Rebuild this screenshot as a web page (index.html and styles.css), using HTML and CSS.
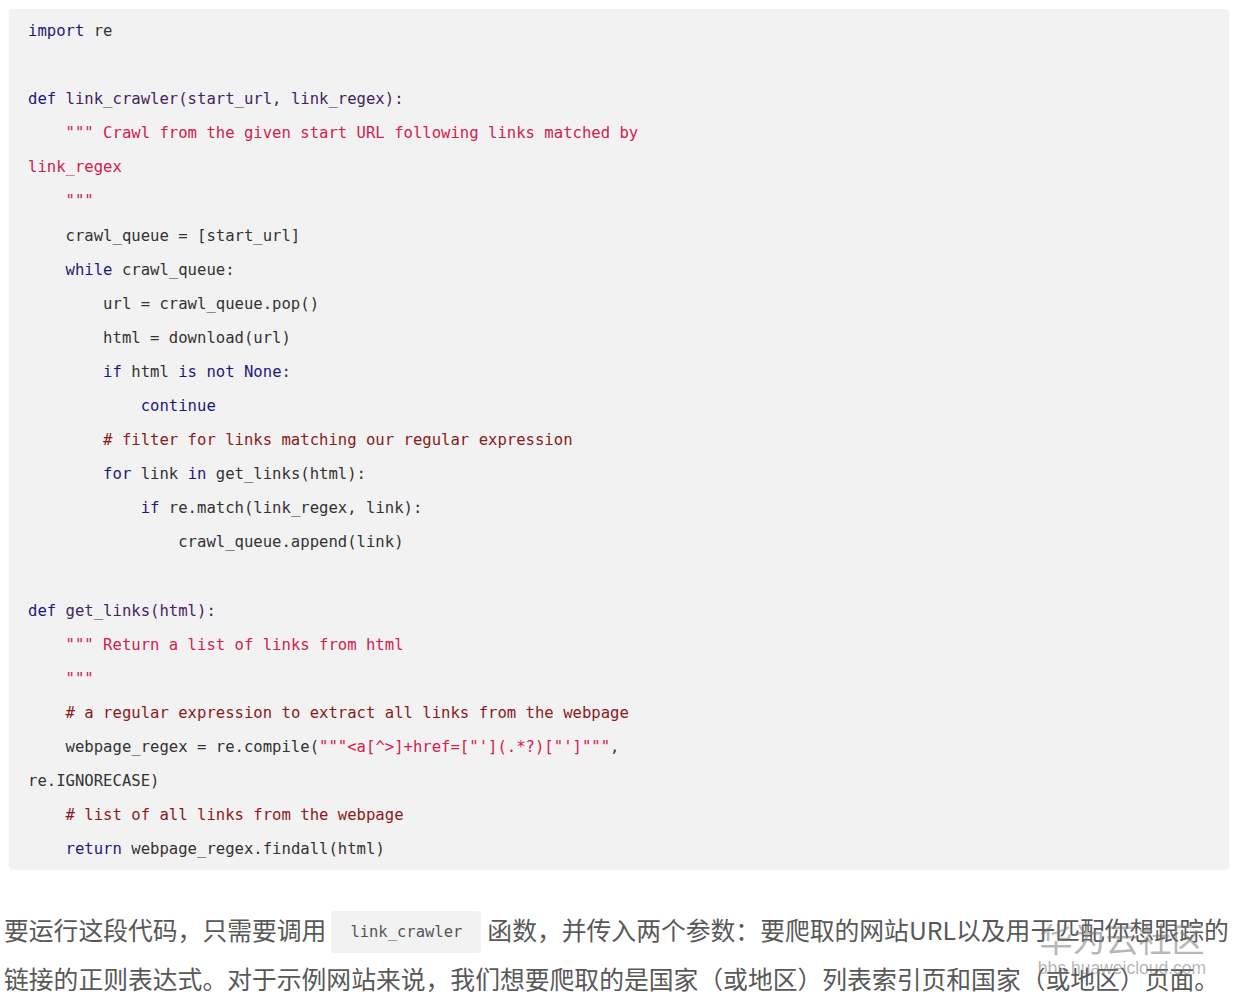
FILE: index.html
```html
<!DOCTYPE html>
<html lang="zh-CN">
<head>
<meta charset="utf-8">
<title>link_crawler</title>
<link rel="stylesheet" href="styles.css">
</head>
<body>
<div class="page">
<pre class="code"><code><span class="kw">import</span> re

<span class="kw">def</span> <span class="fn">link_crawler(start_url, link_regex):</span>
    <span class="str">""" Crawl from the given start URL following links matched by</span>
<span class="str">link_regex</span>
    <span class="str">"""</span>
    crawl_queue = [start_url]
    <span class="kw">while</span> crawl_queue:
        url = crawl_queue.pop()
        html = download(url)
        <span class="kw">if</span> html <span class="kw">is</span> <span class="kw">not</span> <span class="kw">None</span>:
            <span class="kw">continue</span>
        <span class="cm"># filter for links matching our regular expression</span>
        <span class="kw">for</span> link <span class="kw">in</span> get_links(html):
            <span class="kw">if</span> re.match(link_regex, link):
                crawl_queue.append(link)

<span class="kw">def</span> <span class="fn">get_links(html):</span>
    <span class="str">""" Return a list of links from html</span>
    <span class="str">"""</span>
    <span class="cm"># a regular expression to extract all links from the webpage</span>
    webpage_regex = re.compile(<span class="str">"""&lt;a[^&gt;]+href=["'](.*?)["']"""</span>,
re.IGNORECASE)
    <span class="cm"># list of all links from the webpage</span>
    <span class="kw">return</span> webpage_regex.findall(html)</code></pre>
<p class="text">要运行这段代码，只需要调用<code class="inline">link_crawler</code>函数，并传入两个参数：要爬取的网站URL以及用于匹配你想跟踪的链接的正则表达式。对于示例网站来说，我们想要爬取的是国家（或地区）列表索引页和国家（或地区）页面。</p>
<div class="watermark">
<div class="wm-title">华为云社区</div>
<div class="wm-url">bbs.huaweicloud.com</div>
</div>
</div>
</body>
</html>
```
FILE: styles.css
```css
html, body {
  margin: 0;
  padding: 0;
  background: #ffffff;
}

.page {
  position: relative;
  padding: 0 6px 0 4px;
  height: 1003px;
  overflow: hidden;
}

.code {
  margin: 9px 1px 0 5px;
  padding: 5px 18px 3px 19px;
  background: #f2f2f2;
  border-radius: 4px;
  box-shadow: 0 1px 2px rgba(0, 0, 0, 0.05);
  font-family: "DejaVu Sans Mono", "Liberation Mono", monospace;
  font-size: 15.6px;
  line-height: 34.1px;
  color: #333333;
  white-space: pre;
  overflow: hidden;
}

.code code {
  font-family: inherit;
}

.kw {
  color: #1b1a7a;
}

.fn {
  color: #44245e;
}

.str {
  color: #d2204f;
}

.cm {
  color: #8b1a1a;
}

.text {
  margin: 37px -5px 0 0;
  font-family: "Noto Sans CJK SC", "Noto Sans", sans-serif;
  font-size: 24.8px;
  line-height: 46.5px;
  color: #585858;
}

.inline {
  display: inline-block;
  margin: 0 6px 0 5px;
  padding: 0 19px;
  height: 42px;
  line-height: 42px;
  vertical-align: middle;
  background: #f2f2f2;
  border-radius: 4px;
  font-family: "DejaVu Sans Mono", "Liberation Mono", monospace;
  font-size: 15.5px;
  color: #555555;
  position: relative;
  top: -2px;
}

.watermark {
  position: absolute;
  left: 1034px;
  top: 918px;
  width: 176px;
  text-align: center;
  pointer-events: none;
  color: rgba(120, 120, 120, 0.55);
}

.wm-title {
  font-family: "Noto Sans CJK SC", sans-serif;
  font-size: 33px;
  line-height: 40px;
}

.wm-url {
  font-family: "Liberation Sans", Arial, sans-serif;
  font-size: 17.5px;
  line-height: 20px;
}
```
